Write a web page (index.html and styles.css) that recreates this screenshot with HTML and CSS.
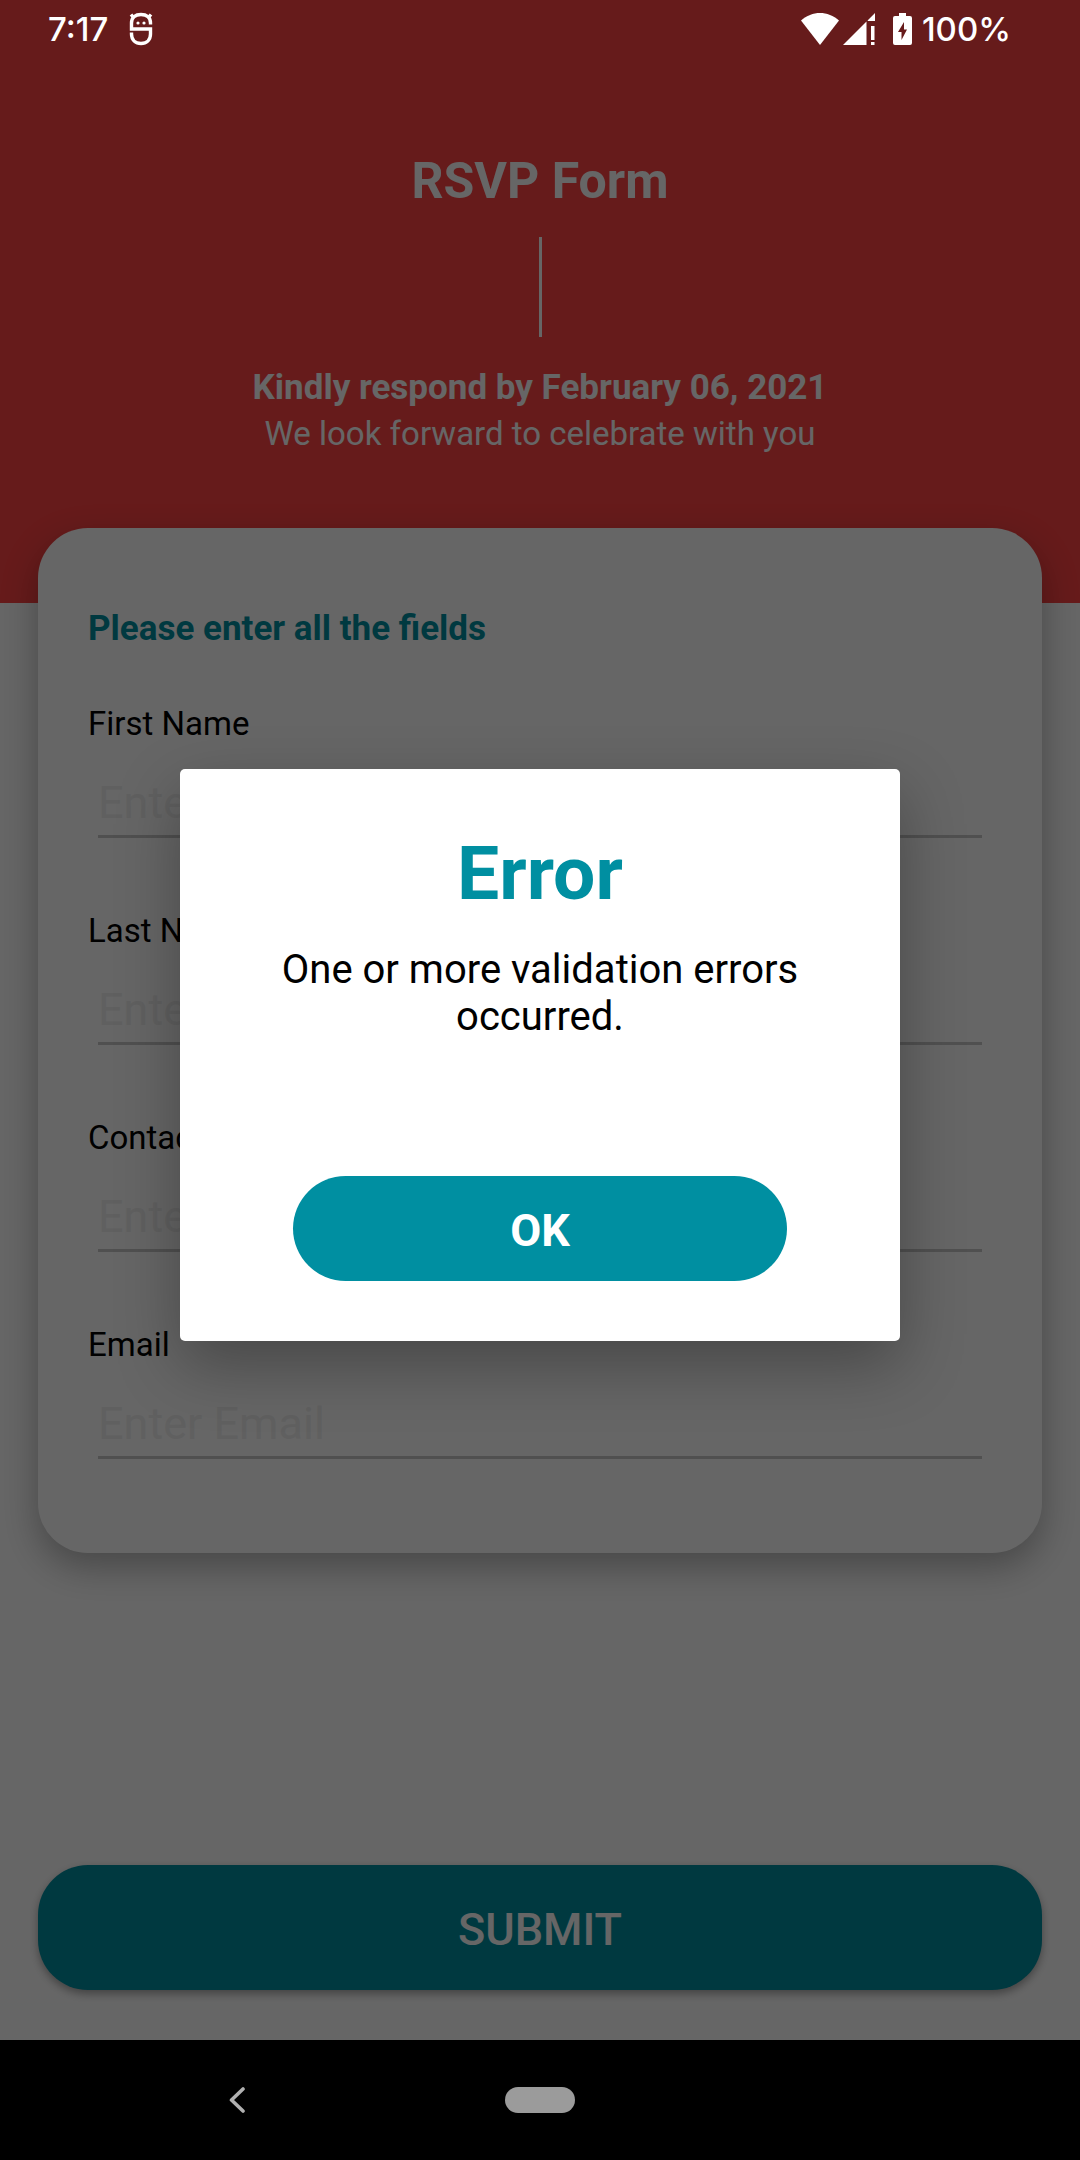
FILE: index.html
```html
<!DOCTYPE html>
<html lang="en">
<head>
<meta charset="utf-8">
<meta name="viewport" content="width=device-width, initial-scale=1">
<title>RSVP Form</title>
<link rel="stylesheet" href="styles.css">
</head>
<body>
<div class="screen">
  <div class="stage">
    <form class="app" action="#" novalidate>
      <header class="hero">
        <h1 class="hero-title">RSVP Form</h1>
        <div class="hero-rule"></div>
        <p class="hero-deadline">Kindly respond by February 06, 2021</p>
        <p class="hero-note">We look forward to celebrate with you</p>
      </header>
      <section class="card">
        <h2 class="card-title">Please enter all the fields</h2>
        <div class="fields">
          <div class="field">
            <label class="label" for="first-name">First Name</label>
            <input class="input" id="first-name" type="text" placeholder="Enter First Name">
          </div>
          <div class="field">
            <label class="label" for="last-name">Last Name</label>
            <input class="input" id="last-name" type="text" placeholder="Enter Last Name">
          </div>
          <div class="field">
            <label class="label" for="contact">Contact Number</label>
            <input class="input" id="contact" type="tel" placeholder="Enter Contact Number">
          </div>
          <div class="field">
            <label class="label" for="email">Email</label>
            <input class="input" id="email" type="email" placeholder="Enter Email">
          </div>
        </div>
      </section>
      <button class="submit" type="submit">SUBMIT</button>
    </form>

    <div class="overlay">
      <div class="dialog" role="alertdialog" aria-modal="true" aria-labelledby="dialog-title" aria-describedby="dialog-text">
        <h2 class="dialog-title" id="dialog-title">Error</h2>
        <p class="dialog-text" id="dialog-text">One or more validation errors occurred.</p>
        <button class="dialog-ok" type="button">OK</button>
      </div>
    </div>

    <div class="status">
      <span class="status-text">7:17</span>
      <svg class="status-app" width="24" height="34" viewBox="0 0 24 34" fill="none" stroke="#fff" stroke-width="3.400" aria-hidden="true">
        <path d="M21.500 12.500V11C21.500 5 17.500 2.500 12 2.500S2.500 5 2.500 11V17H21.500V22C21.500 28 17.500 31.500 12 31.500S2.500 28 2.500 22V20.500"/>
        <path d="M5 6L2 2.500M19 6L22 2.500"/>
        <circle cx="9" cy="11" r="1.600" fill="#fff" stroke="none"/>
        <circle cx="15" cy="11" r="1.600" fill="#fff" stroke="none"/>
      </svg>
      <div class="status-right">
        <svg width="38" height="32" viewBox="0 0 38 32" fill="#fff" aria-hidden="true">
          <path d="M0 7.500C11 -2.500 27 -2.500 38 7.500L19 32Z"/>
        </svg>
        <svg width="32" height="32" viewBox="0 0 32 32" fill="#fff" aria-hidden="true">
          <path d="M0 32L23.500 8.500V32ZM24.500 7.500L32 0V8H25Z"/>
          <path d="M28 13H31.500V27H28ZM28 29H31.500V32H28Z"/>
        </svg>
        <svg class="status-battery" width="19" height="32" viewBox="0 0 19 32" fill="#fff" fill-rule="evenodd" aria-hidden="true">
          <path d="M6 0H13V3H17Q19 3 19 5V30Q19 32 17 32H2Q0 32 0 30V5Q0 3 2 3H6ZM11 9L5 19H8.500V27L14 16.500H11Z"/>
        </svg>
        <span class="status-text">100%</span>
      </div>
    </div>
  </div>

  <nav class="navbar" aria-label="System navigation">
    <button class="nav-back" type="button" aria-label="Back">
      <svg width="16" height="26" viewBox="0 0 16 26" fill="none" stroke="#b0b0b0" stroke-width="3.600" stroke-linecap="round" stroke-linejoin="round" aria-hidden="true">
        <path d="M14 2L2.500 13L14 24"/>
      </svg>
    </button>
    <button class="nav-home" type="button" aria-label="Home"></button>
  </nav>
</div>
</body>
</html>
```
FILE: styles.css
```css
* {
  box-sizing: border-box;
}

body {
  margin: 0;
  background: #fff;
  color: #000;
  font-family: Roboto, "Liberation Sans", sans-serif;
}

h1, h2, p {
  margin: 0;
}

button {
  border: 0;
  padding: 0;
  font-family: inherit;
  cursor: pointer;
}

.screen {
  display: grid;
  grid-template-rows: 1fr 120px;
  min-height: 100vh;
}

/* The form, the dimmed dialog layer and the status bar share one cell */
.stage {
  display: grid;
}

.app,
.overlay,
.status {
  grid-area: 1 / 1;
  min-width: 0;
}

.app {
  display: flex;
  flex-direction: column;
}

.hero {
  display: flex;
  flex-direction: column;
  align-items: center;
  padding: 151px 38px 147px;
  background: #ff4444;
  color: #fff;
  text-align: center;
}

.hero-title {
  font-size: 50px;
  line-height: 60px;
}

.hero-rule {
  width: 3px;
  height: 100px;
  margin: 26px 0 28px;
  background: #fff;
}

.hero-deadline {
  font-size: 35px;
  font-weight: 700;
  line-height: 46px;
}

.hero-note {
  font-size: 33px;
  line-height: 45px;
}

.card {
  margin: -75px 38px 50px;
  padding: 78px 50px 94px;
  border-radius: 50px;
  background: #fff;
  box-shadow: 0 14px 36px rgba(0, 0, 0, 0.3);
}

.card-title {
  color: #008fa1;
  font-size: 35px;
  line-height: 46px;
}

.fields {
  display: grid;
  gap: 73px;
  margin-top: 52px;
}

.field {
  display: grid;
}

.label {
  font-size: 33px;
  line-height: 40px;
}

.input {
  min-width: 0;
  margin: 31px 10px 0;
  padding: 0 0 6px;
  border: 0;
  border-bottom: 3px solid #c8c8c8;
  background: none;
  color: #000;
  font-family: inherit;
  font-size: 45px;
  line-height: 54px;
  height: 63px;
}

.input::placeholder {
  color: #f0f0f0;
  opacity: 1;
}

.submit {
  height: 125px;
  margin: auto 38px 50px;
  padding-top: 3px;
  border-radius: 50px;
  background: #008fa1;
  box-shadow: 0 4px 8px rgba(0, 0, 0, 0.35);
  color: #fff;
  font-size: 45px;
  font-weight: 500;
}

.overlay {
  display: grid;
  place-content: center stretch;
  padding: 70px 180px 0;
  background: rgba(0, 0, 0, 0.6);
}

.dialog {
  display: grid;
  padding: 59px 50px 60px;
  border-radius: 5px;
  background: #fff;
  box-shadow: 0 24px 64px rgba(0, 0, 0, 0.3);
  text-align: center;
}

.dialog-title {
  color: #008fa1;
  font-size: 75px;
  line-height: 90px;
}

.dialog-text {
  margin-top: 28px;
  font-size: 40px;
  line-height: 47px;
}

.dialog-ok {
  height: 105px;
  margin: 136px 63px 0;
  padding-top: 3px;
  border-radius: 53px;
  background: #008fa1;
  color: #fff;
  font-size: 45px;
  font-weight: 700;
}

.status {
  display: flex;
  align-items: center;
  align-self: start;
  height: 58px;
  padding: 0 69px 0 48px;
  color: #fff;
}

.status-text {
  font-family: Inter, Roboto, sans-serif;
  font-size: 33px;
  font-weight: 500;
  line-height: 40px;
}

.status-app {
  margin-left: 21px;
}

.status-right {
  display: flex;
  align-items: center;
  gap: 4px;
  margin-left: auto;
}

.status-battery {
  margin: 0 6px 0 14px;
}

.navbar {
  display: grid;
  grid-template-columns: 1fr 70px 1fr;
  align-items: center;
  background: #000;
}

.nav-back {
  display: grid;
  justify-self: center;
  margin-right: 32px;
  background: none;
}

.nav-home {
  height: 26px;
  border-radius: 13px;
  background: #9b9b9b;
}
```
